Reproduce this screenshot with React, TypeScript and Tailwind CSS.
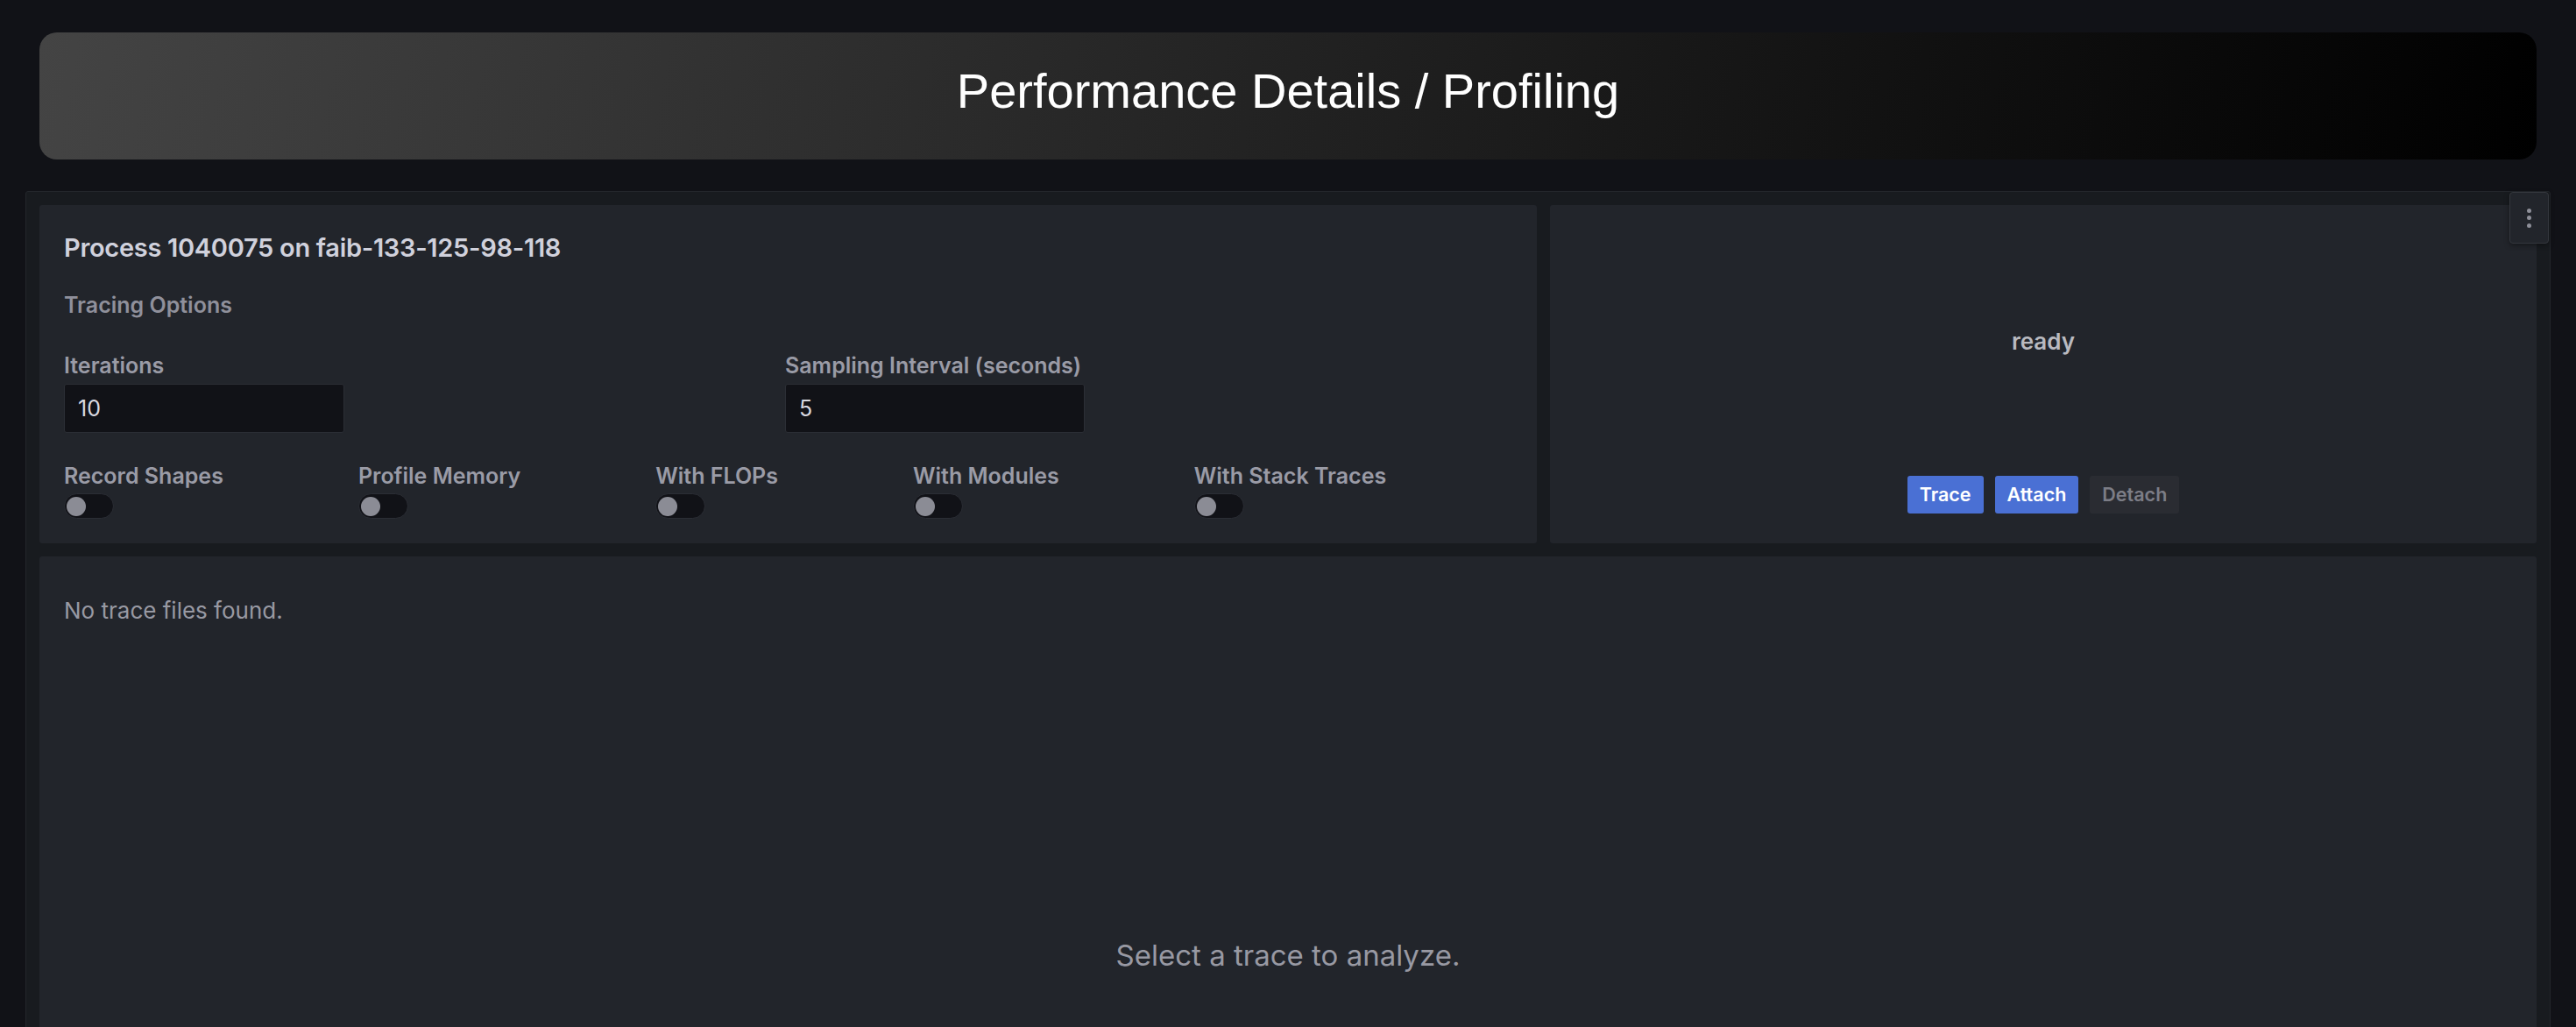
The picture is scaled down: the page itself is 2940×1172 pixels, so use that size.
import { useState } from 'react';

const toggleLabels = [
  'Record Shapes',
  'Profile Memory',
  'With FLOPs',
  'With Modules',
  'With Stack Traces',
];

function Toggle({ label }: { label: string }) {
  const [on, setOn] = useState(false);
  return (
    <div className="flex flex-col">
      <span className="text-[25px] leading-[30px] font-semibold text-[#9a9ba6]">
        {label}
      </span>
      <button
        onClick={() => setOn(!on)}
        className={`mt-[5px] flex h-[29px] w-[57px] items-center rounded-full border border-[#2b2e35] px-[2px] ${
          on ? 'justify-end bg-[#3d71d9]' : 'justify-start bg-[#111217]'
        }`}
      >
        <span className="h-[22px] w-[22px] rounded-full bg-[#8b8c95]" />
      </button>
    </div>
  );
}

function Field({
  label,
  value,
  width,
}: {
  label: string;
  value: string;
  width: string;
}) {
  return (
    <div className="flex flex-col">
      <span className="text-[25px] leading-[30px] font-semibold text-[#9a9ba6]">
        {label}
      </span>
      <input
        defaultValue={value}
        className={`mt-[6.5px] h-[56px] ${width} rounded-[3px] border border-[#2b2e35] bg-[#111217] px-[15px] text-[25px] text-[#d8d9e0] outline-none`}
      />
    </div>
  );
}

export default function App() {
  return (
    <div className="min-h-screen overflow-hidden bg-[#111217] px-[29px] pt-[37px] font-['Inter','Noto_Sans',sans-serif]">
      {/* banner */}
      <div className="mx-[16px] flex h-[145px] items-center justify-center rounded-[20px] bg-[linear-gradient(100deg,#444444,#000000)] pb-[12px]">
        <h1 className="font-['Liberation_Sans',Arial,sans-serif] text-[56px] font-normal text-white">
          Performance Details / Profiling
        </h1>
      </div>

      {/* dashboard panel */}
      <div className="relative mt-[36px] rounded-[3px] border border-[#23262b] bg-[#181b1f] p-[15px]">
        <button className="absolute top-0 right-[1px] flex h-[59px] w-[45px] flex-col items-center justify-center gap-[3.5px] rounded-[4px] border border-[#34373d] bg-[#22252b] shadow-[0_2px_6px_rgba(0,0,0,0.4)]">
          <span className="h-[5px] w-[5px] rounded-full bg-[#8e8f99]" />
          <span className="h-[5px] w-[5px] rounded-full bg-[#8e8f99]" />
          <span className="h-[5px] w-[5px] rounded-full bg-[#8e8f99]" />
        </button>

        <div className="flex gap-[15px]">
          {/* tracing options */}
          <div className="w-[1709px] rounded-[3px] bg-[#22252b] px-[28px] pt-[31px] pb-[28px]">
            <h2 className="text-[29px] leading-[36px] font-semibold tracking-[-0.3px] text-[#d0d1dc]">
              Process 1040075 on faib-133-125-98-118
            </h2>
            <div className="mt-[31.5px] text-[25px] leading-[30px] font-semibold text-[#8f909b]">
              Tracing Options
            </div>
            <div className="mt-[39px] flex">
              <div className="w-[823px]">
                <Field label="Iterations" value="10" width="w-[320px]" />
              </div>
              <Field
                label="Sampling Interval (seconds)"
                value="5"
                width="w-[342px]"
              />
            </div>
            <div className="mt-[34px] flex gap-[154px]">
              {toggleLabels.map((l) => (
                <Toggle key={l} label={l} />
              ))}
            </div>
          </div>

          {/* status */}
          <div className="flex flex-1 flex-col items-center rounded-[3px] bg-[#22252b] pt-[140px] pb-[34px]">
            <div className="text-[26px] leading-[32px] font-semibold text-[#b9bac0]">
              ready
            </div>
            <div className="mt-[137px] flex gap-[13px]">
              <button className="h-[43px] rounded-[3px] bg-[#4a70d4] px-[14px] text-[21.5px] font-semibold text-white">
                Trace
              </button>
              <button className="h-[43px] rounded-[3px] bg-[#4a70d4] px-[14px] text-[21.5px] font-semibold text-white">
                Attach
              </button>
              <button className="h-[43px] rounded-[3px] bg-[#2a2c32] px-[14px] text-[21.5px] font-semibold text-[#7c7d86]">
                Detach
              </button>
            </div>
          </div>
        </div>

        {/* trace list */}
        <div className="mt-[15px] flex h-[700px] flex-col rounded-[3px] bg-[#22252b] px-[28px] pt-[47px]">
          <p className="text-[26px] leading-[30px] text-[#9899a3]">
            No trace files found.
          </p>
          <p className="mt-[357px] text-center text-[33px] leading-[42px] text-[#9899a3]">
            Select a trace to analyze.
          </p>
        </div>
      </div>
    </div>
  );
}
